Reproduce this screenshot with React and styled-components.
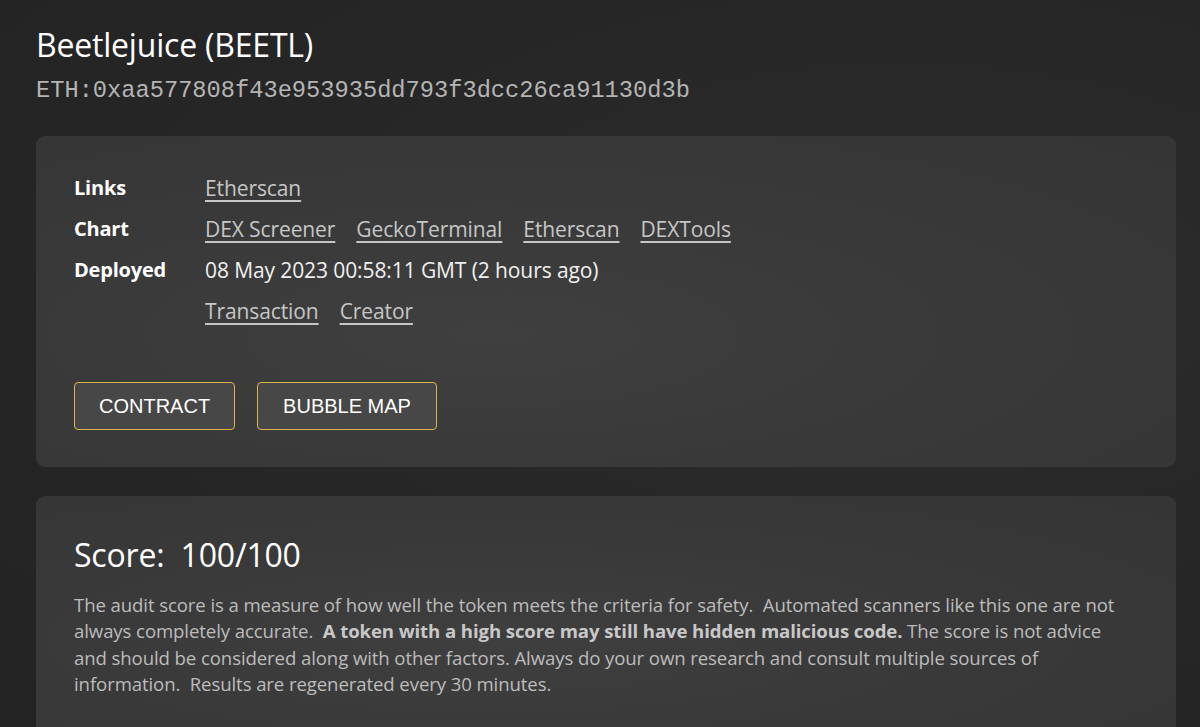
import React from "react";
import styled, { createGlobalStyle } from "styled-components";

const GlobalStyle = createGlobalStyle`
  html, body {
    margin: 0;
    padding: 0;
    background: #262626;
  }
  body {
    font-family: "Open Sans", "Noto Sans", sans-serif;
    color: #fff;
  }
`;

const Page = styled.div`
  min-height: 727px;
  box-sizing: border-box;
  padding: 25px 24px 0 36px;
  background: radial-gradient(ellipse at 75% 40%, #2c2c2c 0%, #262626 55%, #232323 100%);
  overflow: hidden;
`;

const Title = styled.h1`
  margin: 0;
  font-size: 32px;
  font-weight: 400;
  line-height: 40px;
  color: #fff;
  letter-spacing: -0.2px;
`;

const Address = styled.div`
  margin-top: 12px;
  font-family: "Liberation Mono", "Courier New", monospace;
  font-size: 23.7px;
  line-height: 28px;
  color: #b4b4b4;
`;

const Card = styled.section`
  width: 1140px;
  box-sizing: border-box;
  margin-top: ${(p) => p.$top}px;
  padding: ${(p) => p.$pad};
  border-radius: 9px;
  background: radial-gradient(ellipse at 40% 60%, #3f3f3f 0%, #393939 50%, #353535 100%);
`;

const InfoGrid = styled.div`
  display: grid;
  grid-template-columns: 131px 1fr;
  row-gap: 13px;
`;

const Label = styled.div`
  font-size: 20px;
  font-weight: 700;
  line-height: 28px;
  color: #fff;
  letter-spacing: -0.2px;
`;

const Values = styled.div`
  display: flex;
  gap: 21px;
  font-size: 21px;
  line-height: 28px;
  color: #f0f0f0;
  letter-spacing: -0.1px;
`;

const Link = styled.a`
  color: #c6c6c6;
  text-decoration: underline;
  text-underline-offset: 4px;
  text-decoration-thickness: 1.5px;
  cursor: pointer;
`;

const Buttons = styled.div`
  display: flex;
  gap: 22px;
  margin-top: 57px;
`;

const Button = styled.button`
  height: 48px;
  padding: 0 ${(p) => p.$px}px;
  border: 1.5px solid #d9b54a;
  border-radius: 4px;
  background: #474747;
  color: #fff;
  font-family: "Liberation Sans", Arial, sans-serif;
  font-size: 20px;
  cursor: pointer;
`;

const Score = styled.h2`
  margin: 0;
  font-size: 32px;
  font-weight: 400;
  line-height: 42px;
  color: #fff;
  white-space: pre;
  letter-spacing: -0.2px;
`;

const Para = styled.p`
  margin: 16px 0 0;
  font-size: 18.6px;
  line-height: 26.3px;
  color: #bcbcbc;
  white-space: pre-wrap;
  letter-spacing: -0.1px;

  strong {
    font-weight: 700;
    color: #c8c8c8;
  }
`;

const chartLinks = ["DEX Screener", "GeckoTerminal", "Etherscan", "DEXTools"];

export default function App() {
  return (
    <>
      <GlobalStyle />
      <Page>
        <Title>Beetlejuice (BEETL)</Title>
        <Address>ETH:0xaa577808f43e953935dd793f3dcc26ca91130d3b</Address>

        <Card $top={31} $pad="38px 38px 37px">
          <InfoGrid>
            <Label>Links</Label>
            <Values>
              <Link>Etherscan</Link>
            </Values>
            <Label>Chart</Label>
            <Values>
              {chartLinks.map((l) => (
                <Link key={l}>{l}</Link>
              ))}
            </Values>
            <Label>Deployed</Label>
            <Values>08 May 2023 00:58:11 GMT (2 hours ago)</Values>
            <div />
            <Values>
              <Link>Transaction</Link>
              <Link>Creator</Link>
            </Values>
          </InfoGrid>
          <Buttons>
            <Button $px={24}>CONTRACT</Button>
            <Button $px={25}>BUBBLE MAP</Button>
          </Buttons>
        </Card>

        <Card $top={29} $pad="38px 38px 40px">
          <Score>{"Score:  100/100"}</Score>
          <Para>
            {"The audit score is a measure of how well the token meets the criteria for safety.  Automated scanners like this one are not always completely accurate.  "}
            <strong>A token with a high score may still have hidden malicious code.</strong>
            {" The score is not advice and should be considered along with other factors. Always do your own research and consult multiple sources of information.  Results are regenerated every 30 minutes."}
          </Para>
        </Card>
      </Page>
    </>
  );
}
